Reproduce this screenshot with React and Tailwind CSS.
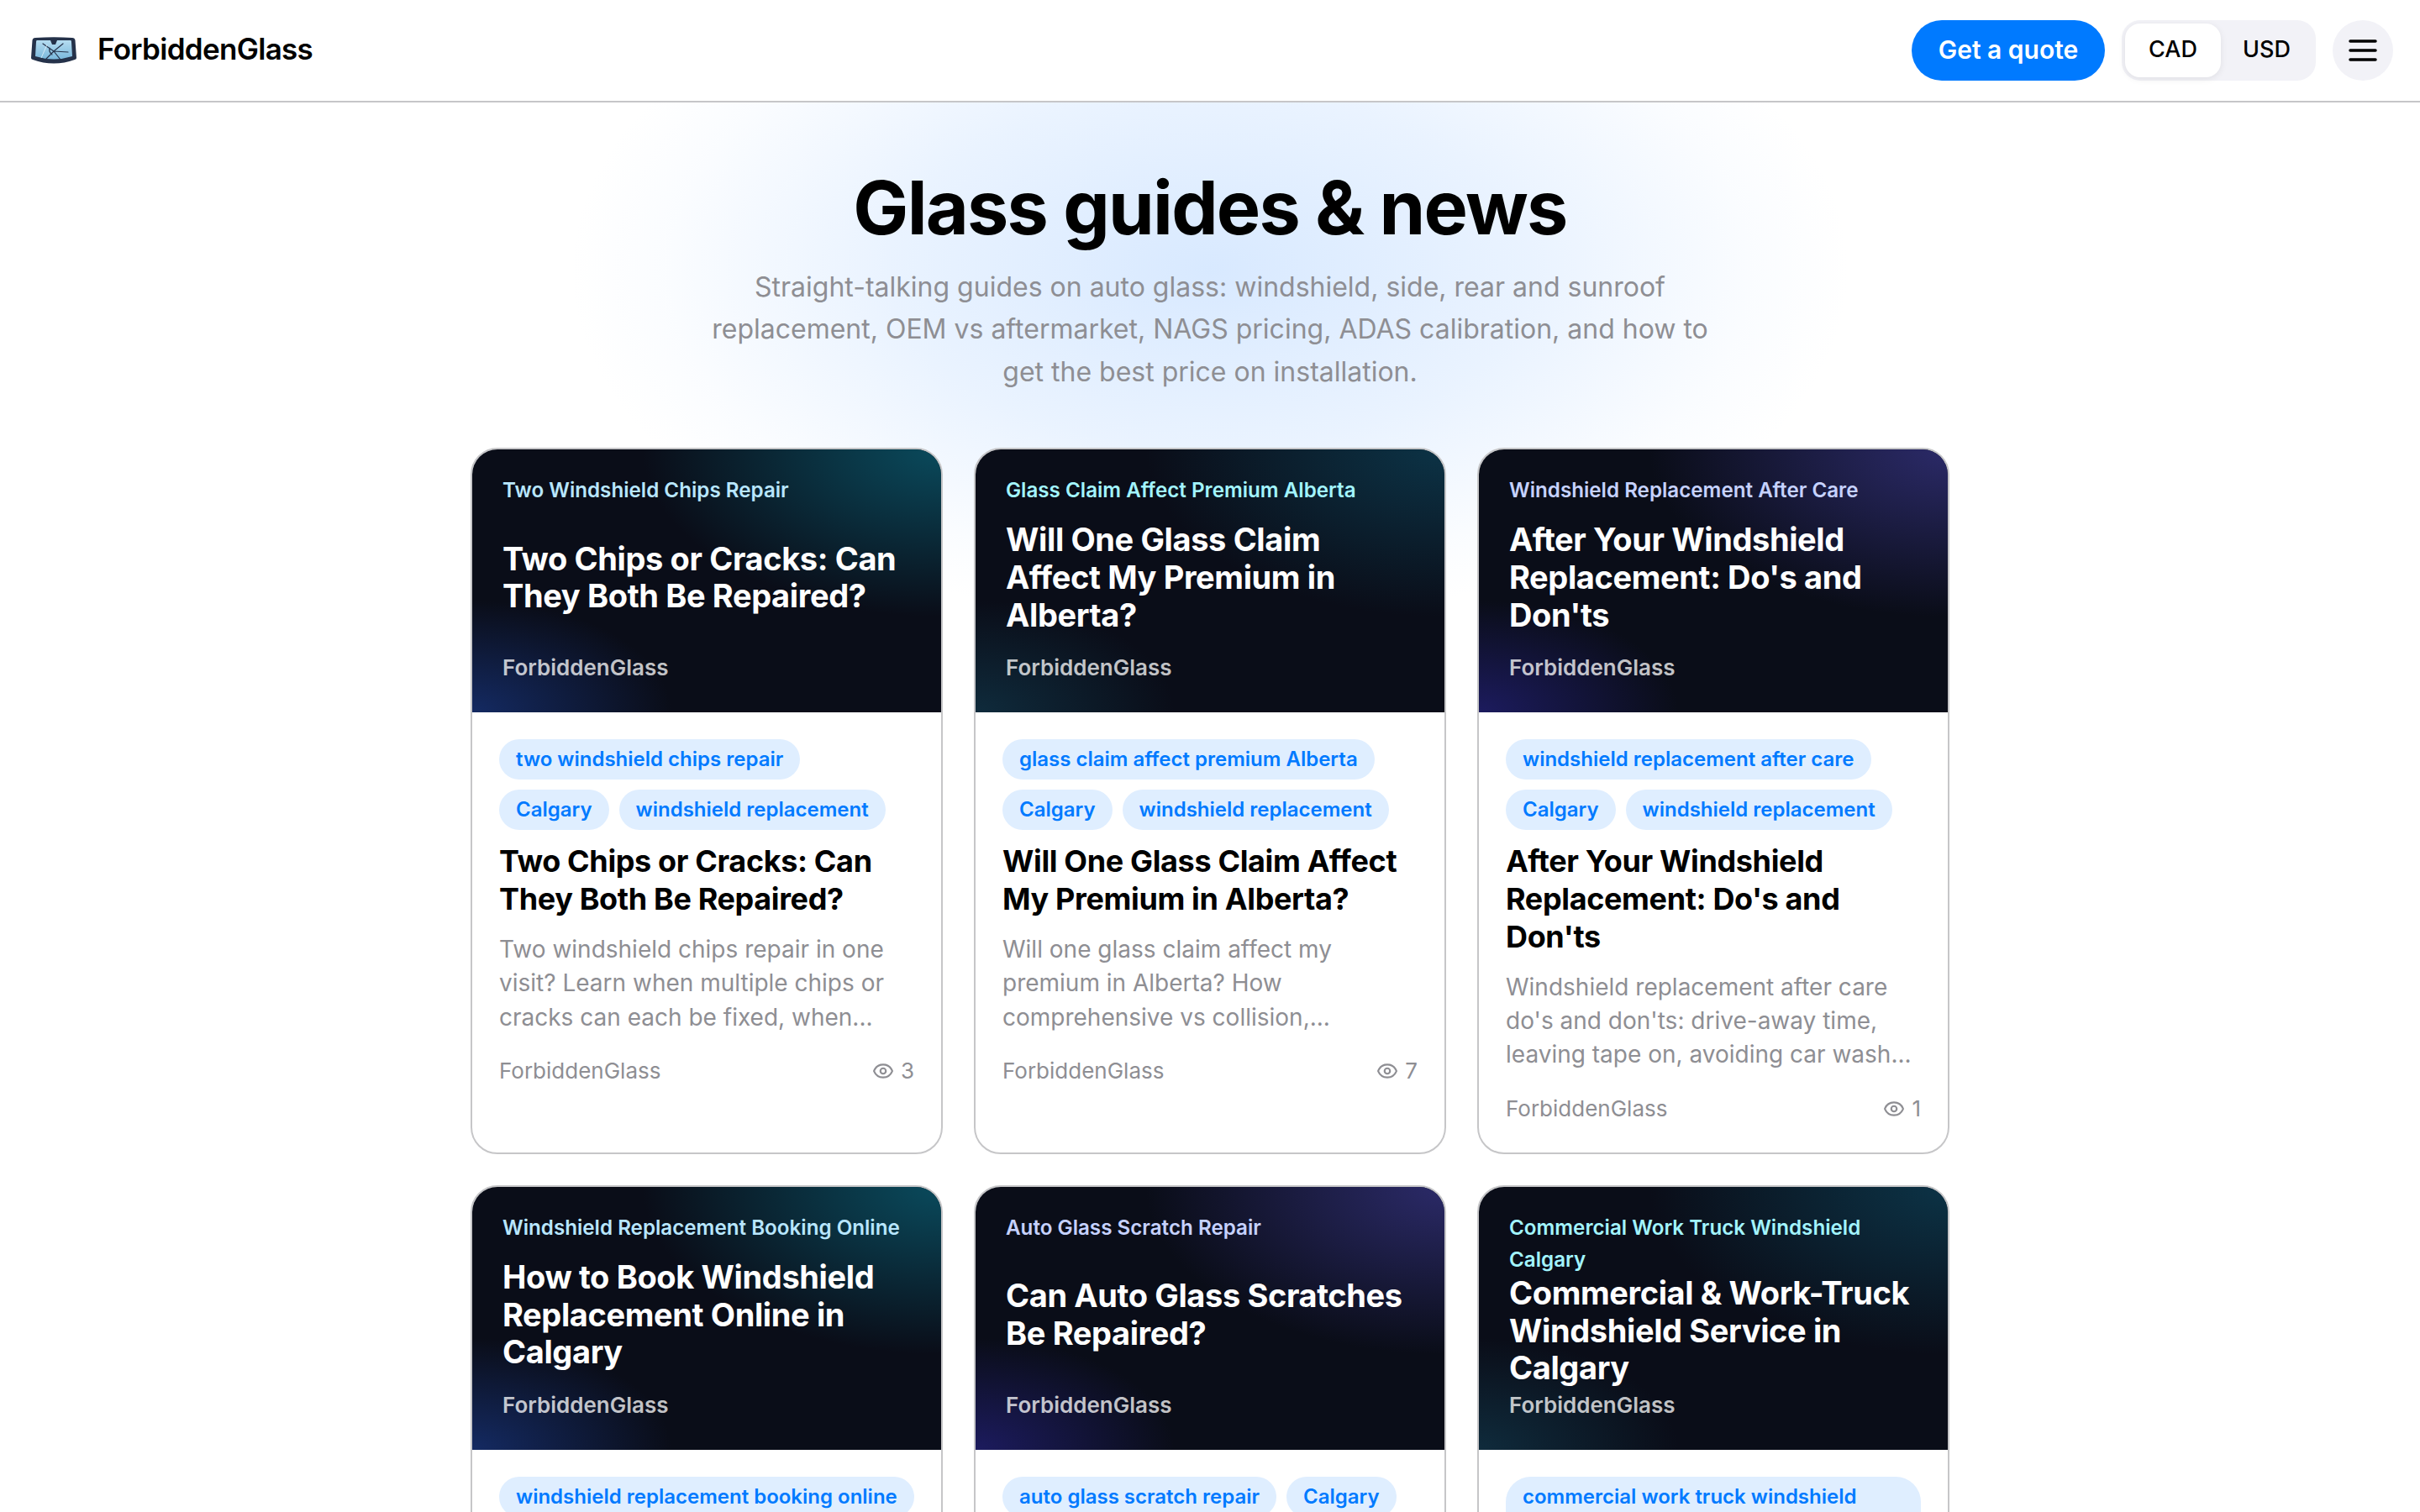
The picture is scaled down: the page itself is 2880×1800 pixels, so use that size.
import { Eye } from "lucide-react";

const teal = "bg-[radial-gradient(ellipse_at_top_right,#0a4a5c_0%,rgba(10,74,92,0)_45%),radial-gradient(ellipse_at_bottom_left,#142a62_0%,rgba(20,42,98,0)_30%),linear-gradient(#0a0d18,#0a0d18)]";
const cyan = "bg-[radial-gradient(ellipse_at_top_right,#0c3346_0%,rgba(12,51,70,0)_45%),radial-gradient(ellipse_at_bottom_left,#0f2b3c_0%,rgba(15,43,60,0)_30%),linear-gradient(#0a0d18,#0a0d18)]";
const violet = "bg-[radial-gradient(ellipse_at_top_right,#2b2a68_0%,rgba(43,42,104,0)_45%),radial-gradient(ellipse_at_bottom_left,#1c1b5e_0%,rgba(28,27,94,0)_30%),linear-gradient(#0a0d18,#0a0d18)]";

const posts = [
  {
    slug: "Two Windshield Chips Repair",
    title: "Two Chips or Cracks: Can They Both Be Repaired?",
    tags: ["two windshield chips repair", "Calgary", "windshield replacement"],
    excerpt: "Two windshield chips repair in one visit? Learn when multiple chips or cracks can each be fixed, when...",
    views: 3,
    bg: teal,
    slugColor: "text-sky-200",
  },
  {
    slug: "Glass Claim Affect Premium Alberta",
    title: "Will One Glass Claim Affect My Premium in Alberta?",
    tags: ["glass claim affect premium Alberta", "Calgary", "windshield replacement"],
    excerpt: "Will one glass claim affect my premium in Alberta? How comprehensive vs collision,...",
    views: 7,
    bg: cyan,
    slugColor: "text-cyan-200",
  },
  {
    slug: "Windshield Replacement After Care",
    title: "After Your Windshield Replacement: Do's and Don'ts",
    tags: ["windshield replacement after care", "Calgary", "windshield replacement"],
    excerpt: "Windshield replacement after care do's and don'ts: drive-away time, leaving tape on, avoiding car wash...",
    views: 1,
    bg: violet,
    slugColor: "text-indigo-200",
  },
  {
    slug: "Windshield Replacement Booking Online",
    title: "How to Book Windshield Replacement Online in Calgary",
    tags: ["windshield replacement booking online"],
    bg: teal,
    slugColor: "text-sky-200",
  },
  {
    slug: "Auto Glass Scratch Repair",
    title: "Can Auto Glass Scratches Be Repaired?",
    tags: ["auto glass scratch repair", "Calgary"],
    bg: violet,
    slugColor: "text-indigo-200",
  },
  {
    slug: "Commercial Work Truck Windshield Calgary",
    title: "Commercial & Work-Truck Windshield Service in Calgary",
    tags: ["commercial work truck windshield Calgary"],
    bg: cyan,
    slugColor: "text-cyan-200",
  },
];

function Logo() {
  return (
    <svg width="54" height="32" viewBox="0 0 54 32" fill="none">
      <defs>
        <linearGradient id="glass" x1="0" y1="0" x2="0" y2="1">
          <stop offset="0" stopColor="#b5dcf0" />
          <stop offset="1" stopColor="#7ab8dc" />
        </linearGradient>
      </defs>
      <path d="M5 1 Q27 -0.5 49 1 Q52 1 52.500 4 L54 25 Q54 26.500 52 27 Q27 36 2 27 Q0 26.500 0 25 L1.500 4 Q2 1 5 1Z" fill="#25324a" />
      <path d="M7 4 L23 4 L25 9 L29 9 L31 4 L47 4 Q48 4 48 6 L49 23 Q27 30 5 23 L6 6 Q6 4 7 4Z" fill="url(#glass)" />
      <path d="M14 8 L27 17 L38 8 M27 17 L17 27 M27 17 L35 27 M27 17 L44 18 M22 13 Q21 18 25 21" stroke="#25324a" strokeWidth="1.2" strokeLinecap="round" />
      <path d="M12 25 L19 9" stroke="#e4f3fb" strokeWidth="0.8" />
    </svg>
  );
}

function Card({ post }) {
  return (
    <article className="flex flex-col overflow-hidden rounded-[32px] border-2 border-[#c6c6c8] bg-white">
      <div className={`flex h-[313px] flex-col px-[36px] pt-[30px] pb-[31px] ${post.bg}`}>
        <p className={`text-[24.2px] leading-[38px] font-semibold ${post.slugColor}`}>{post.slug}</p>
        <div className="flex min-h-0 flex-1 items-center pb-[2px]">
          <h3 className="text-[38px] leading-[44.6px] font-bold tracking-[-0.01em] text-white">{post.title}</h3>
        </div>
        <p className="text-[26px] leading-[44px] font-semibold text-white/75">ForbiddenGlass</p>
      </div>
      <div className="flex flex-1 flex-col px-[32px] pt-[32px] pb-[32px]">
        <div className="flex flex-wrap gap-x-[12px] gap-y-[12px]">
          {post.tags.map((tag) => (
            <span key={tag} className="rounded-[30px] bg-[#dfeeff] px-[20px] py-[4px] text-[24px] leading-[40px] font-semibold text-[#007aff]">
              {tag}
            </span>
          ))}
        </div>
        <h2 className="mt-[15px] text-[36px] leading-[44.8px] font-bold tracking-[-0.01em] text-black">{post.title}</h2>
        {post.excerpt && <p className="mt-[17px] text-[28px] leading-[40.4px] text-[#8e8e93]">{post.excerpt}</p>}
        {post.excerpt && (
          <div className="mt-[24px] flex items-center justify-between text-[26px] leading-[40px] text-[#8e8e93]">
            <span>ForbiddenGlass</span>
            <span className="flex items-center gap-[8px]">
              <Eye size={26} strokeWidth={2} />
              {post.views}
            </span>
          </div>
        )}
      </div>
    </article>
  );
}

export default function App() {
  return (
    <div className="h-screen overflow-hidden bg-white [font-family:Inter,sans-serif] text-black">
      <header className="flex h-[122px] items-center justify-between border-b-2 border-[#c6c6c8] bg-white pr-[32px] pl-[37px]">
        <div className="flex items-center gap-[25px]">
          <Logo />
          <span className="pb-[3px] text-[35px] font-semibold tracking-[-0.02em]">ForbiddenGlass</span>
        </div>
        <div className="flex items-center gap-[20px]">
          <button className="h-[72px] w-[230px] rounded-full bg-[#007aff] pb-[2px] text-[30px] font-semibold text-white">Get a quote</button>
          <div className="flex h-[72px] w-[231px] items-center rounded-[22px] bg-[#f2f2f7] p-[4px]">
            <span className="flex h-[64px] w-[114px] items-center justify-center rounded-[18px] bg-white pb-[1px] text-[27px] font-medium shadow-[0_2px_8px_rgba(0,0,0,0.08)]">CAD</span>
            <span className="flex h-[64px] flex-1 items-center justify-center pb-[1px] text-[27px] font-medium">USD</span>
          </div>
          <button className="flex h-[72px] w-[72px] items-center justify-center rounded-full bg-[#f2f2f7]">
            <svg width="34" height="26" viewBox="0 0 34 26" stroke="black" strokeWidth="3.5" strokeLinecap="round">
              <path d="M2 2h30M2 13h30M2 24h30" />
            </svg>
          </button>
        </div>
      </header>
      <main className="bg-[radial-gradient(ellipse_760px_420px_at_1440px_200px,#d8e9ff_0%,rgba(216,233,255,0.55)_50%,rgba(216,233,255,0.12)_85%,rgba(216,233,255,0)_100%)] bg-no-repeat">
        <section className="pt-[70px] pb-[65px] text-center">
          <h1 className="text-[88px] leading-[110px] font-bold tracking-[-0.02em]">Glass guides &amp; news</h1>
          <p className="mx-auto mt-[15px] max-w-[1200px] text-[32px] leading-[50.4px] text-[#8e8e93]">
            Straight-talking guides on auto glass: windshield, side, rear and sunroof replacement, OEM vs aftermarket, NAGS pricing, ADAS calibration, and how to get the best price on installation.
          </p>
        </section>
        <section className="mx-auto grid w-[1760px] grid-cols-3 gap-x-[37px] gap-y-[37px]">
          {posts.map((post) => (
            <Card key={post.slug} post={post} />
          ))}
        </section>
      </main>
    </div>
  );
}
